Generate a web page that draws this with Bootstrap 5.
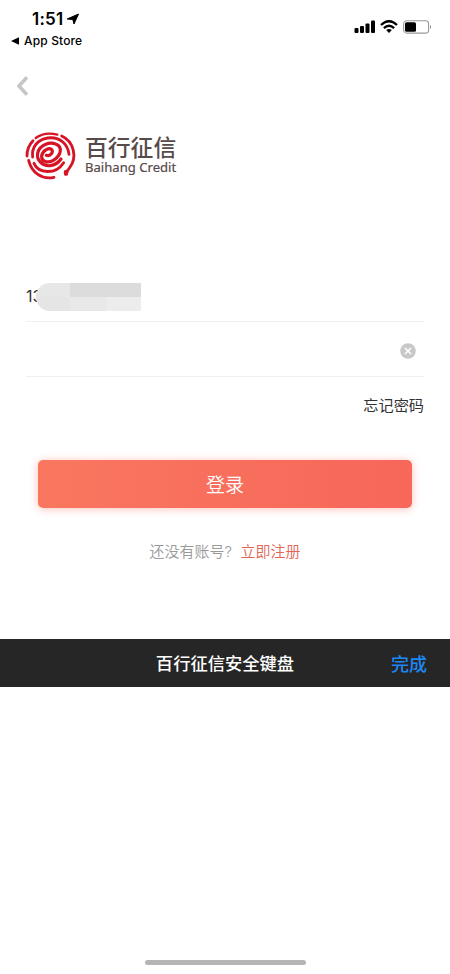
<!DOCTYPE html>
<html lang="zh-CN">
<head>
<meta charset="utf-8">
<meta name="viewport" content="width=device-width, initial-scale=1">
<title>百行征信</title>
<link href="https://cdn.jsdelivr.net/npm/bootstrap@5.3.0/dist/css/bootstrap.min.css" rel="stylesheet">
<style>
body{font-family:Inter,"Noto Sans CJK SC",sans-serif;color:#333;background:#fff}
.screen{height:974px}
svg{display:block;flex:none}
.status{height:60px;color:#000}
.clock{font-size:17px;font-weight:600;line-height:20px;letter-spacing:.2px;padding:9px 0 0 32px;gap:3px}
.return-app{font-size:12px;font-weight:500;line-height:14px;padding:5px 0 0 11px;gap:5px;letter-spacing:.15px}
.indicators{padding:20px 18px 0 0;gap:5px}
.back{height:60px;padding:16px 0 0 17px}
.brand-row{height:70px;padding-left:15px}
.brand-text{padding-top:16px;color:#574a4a}
.brand-cn{font-size:22.8px;line-height:24px;font-weight:500}
.brand-en{font-family:"Noto Sans",sans-serif;font-size:13.1px;line-height:14px;-webkit-text-stroke:.2px #574a4a}
.form-area{padding:80px 26px 0}
.field{border-bottom:1px solid #f0f0f0}
.phone{height:52px;padding-top:2px;font-size:16px}
.phone-digits{margin-top:-2px}
.mosaic{width:105px;height:28px;margin-left:-6px;border-radius:15px 0 0 15px;background:linear-gradient(90deg,#e7e7e7 0 34px,#dcdcdc 34px) 0 0/100% 14px no-repeat,linear-gradient(90deg,#e5e5e5 0 34px,#e8e8e8 34px 70px,#ececec 70px) 0 14px/100% 14px no-repeat}
.secret{height:55px;padding:3px 8px 0 0}
.forgot{font-size:15.2px;line-height:22px;margin-top:18px;color:#333}
.login{height:48px;margin:43px 12px 0;border:0;border-radius:5px;background:linear-gradient(90deg,#f9775f,#f7675a);box-shadow:0 1px 8px rgba(250,105,90,.42);color:#fff;font-size:19px;font-weight:350;line-height:28px;padding:4px 0 0}
.register{font-size:15px;font-weight:350;line-height:22px;margin-top:33px;color:#999;white-space:pre}
.register a{color:#e2665a}
.keyboard-bar{height:48px;margin-top:76px;padding-top:2px;background:#262626;color:#fff;font-size:17.3px;font-weight:500;grid-template-columns:1fr auto 1fr}
.done{color:#1d87f4;font-size:18px;padding-right:23px}
.home-bar{width:161px;height:5px;border-radius:3px;background:#b5b5b5;margin-bottom:9px}
</style>
</head>
<body>
<main class="screen d-flex flex-column overflow-hidden">
<header class="status d-flex justify-content-between">
<div>
<div class="clock d-flex align-items-center">1:51
<svg width="14" height="12" viewBox="0 0 14 12"><path d="M12.5 1 8 11 6.8 6.5 1.2 6Z" fill="#000" stroke="#000" stroke-linejoin="round"/></svg></div>
<div class="return-app d-flex align-items-center"><svg width="8" height="8" viewBox="0 0 8 8"><path d="M0 4 8 .2V7.8Z"/></svg>App Store</div>
</div>
<div class="indicators d-flex">
<svg width="21" height="14" viewBox="0 0 21 14"><rect x=".5" y="8" width="4" height="5" rx="1"/><rect x="6" y="6" width="4" height="7" rx="1"/><rect x="11.5" y="3.5" width="4" height="9.5" rx="1"/><rect x="17" y=".5" width="4" height="12.5" rx="1"/></svg>
<svg width="18" height="14" viewBox="0 0 18 14"><g fill="none" stroke="#000" stroke-width="2.3"><path d="M1 5Q9-2.6 17 5"/><path d="M3.9 8.1Q9 3.4 14.1 8.1"/></g><path d="M6.2 10.1Q9 7.7 11.8 10.1L9 13Z"/></svg>
<svg width="29" height="14" viewBox="0 0 29 14"><rect x=".6" y=".7" width="25" height="12.4" rx="3.2" fill="none" stroke="#999" stroke-width="1.1"/><rect x="2" y="2.2" width="11" height="9.5" rx="1.5"/><path d="M27 5Q29.2 7 27 9Z" fill="#888"/></svg>
</div>
</header>
<nav class="back"><svg width="12" height="20" viewBox="0 0 12 20"><path d="M10 1.2 2 10l8 8.7" fill="none" stroke="#c6c6c6" stroke-width="3.5"/></svg></nav>
<section class="brand-row d-flex">
<svg width="70" height="70" viewBox="0 0 210 210" fill="none" stroke="#d71425" stroke-width="8.5" stroke-linecap="round">
<path d="M62 54Q90 34 127 44" stroke-width="7"/>
<path d="M54 62Q35 82 36 108"/>
<path d="M41 121C49 157 81 180 117 172"/>
<path d="M140 48C176 64 188 111 164 143Q157 151 154 161"/>
<path d="M153 156v5" stroke-width="13"/>
<path d="M53 111C49 82 67 59 98 54C132 49 158 70 162 103"/>
<path d="M57 130C70 160 121 166 146 128"/>
<path d="M94 106C105 110 115 98 111 90C104 80 83 91 80 107C78 124 98 131 115 121C139 107 143 81 124 73C104 64 74 74 68 99C64 121 83 140 106 137C121 135 131 127 138 117" stroke-width="9.5"/>
</svg>
<div class="brand-text d-flex flex-column text-nowrap"><span class="brand-cn">百行征信</span><span class="brand-en">Baihang Credit</span></div>
</section>
<section class="form-area d-flex flex-column">
<div class="field phone d-flex align-items-center"><span class="phone-digits">13</span><span class="mosaic"></span></div>
<div class="field secret d-flex align-items-center justify-content-end"><svg width="16" height="16" viewBox="0 0 16 16"><circle cx="8" cy="8" r="7.8" fill="#c8c8c8"/><path d="m5 5 6 6M11 5l-6 6" stroke="#fff" stroke-width="1.7"/></svg></div>
<div class="forgot text-end">忘记密码</div>
<button class="login btn">登录</button>
<div class="register text-center">还没有账号?  <a class="text-decoration-none" href="#">立即注册</a></div>
</section>
<section class="keyboard-bar d-grid align-items-center"><span></span><span>百行征信安全键盘</span><span class="done text-end">完成</span></section>
<div class="home-bar mt-auto mx-auto"></div>
</main>
<script src="https://cdn.jsdelivr.net/npm/bootstrap@5.3.0/dist/js/bootstrap.bundle.min.js"></script>
</body>
</html>
